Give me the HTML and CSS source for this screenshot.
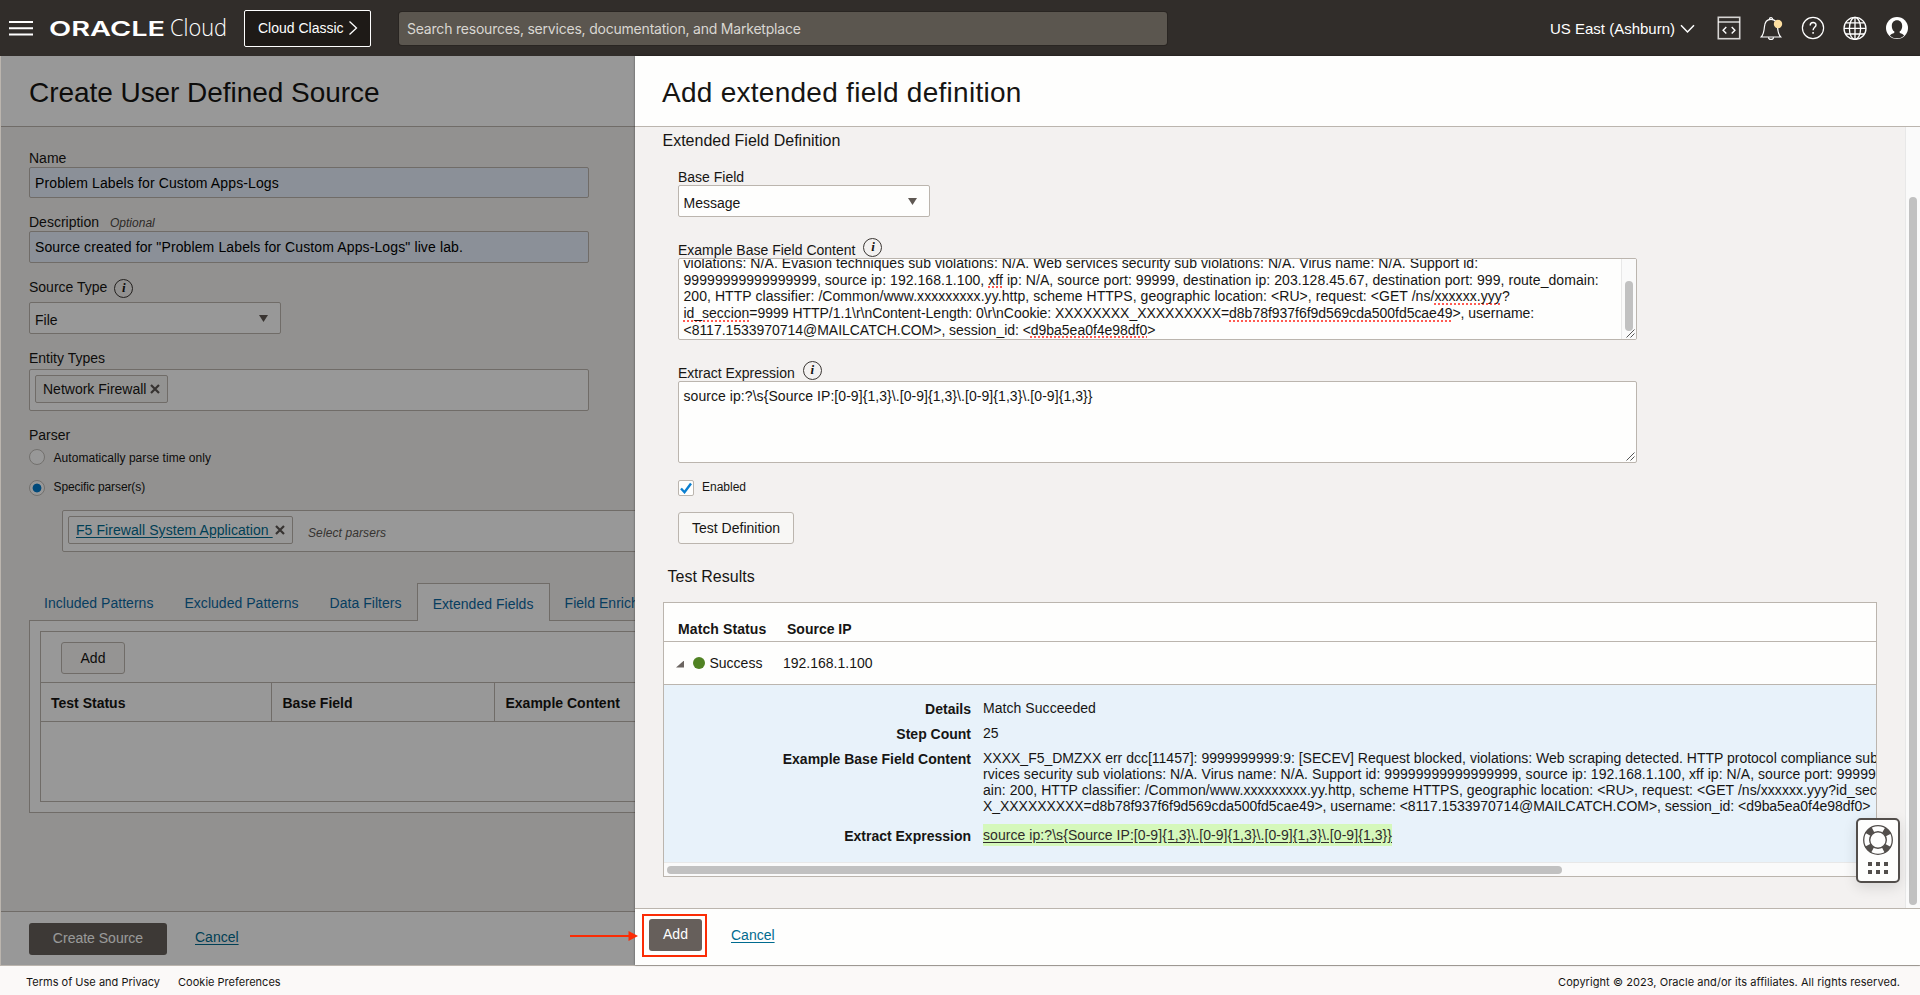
FILE: index.html
```html
<!DOCTYPE html>
<html lang="en">
<head>
<meta charset="utf-8">
<title>Oracle Cloud - Create User Defined Source</title>
<link rel="stylesheet" href="styles.css">
</head>
<body>
<div class="app">
  <header class="topbar">
    <svg class="menu" width="24" height="16" viewBox="0 0 24 16"><path d="M0 2h24M0 8.2h24M0 14.4h24" stroke="#fff" stroke-width="2"/></svg>
    <svg class="logo" width="180" height="28" viewBox="0 0 180 28">
      <text class="logo-oracle" x="0" y="21.500" textLength="116" lengthAdjust="spacingAndGlyphs">ORACLE</text>
      <text class="logo-cloud" x="121" y="21.500" textLength="57" lengthAdjust="spacingAndGlyphs">Cloud</text>
    </svg>
    <div class="classic">Cloud Classic
      <svg width="10" height="16" viewBox="0 0 10 16"><path d="M1.5 1.5L8.5 8l-7 6.5" fill="none" stroke="#fff" stroke-width="1.3"/></svg>
    </div>
    <div class="search">Search resources, services, documentation, and Marketplace</div>
    <div class="region">US East (Ashburn)
      <svg width="15" height="10" viewBox="0 0 15 10"><path d="M1 1.3l6.5 6.7L14 1.3" fill="none" stroke="#fff" stroke-width="1.5"/></svg>
    </div>
    <div class="top-icons">
      <svg width="24" height="24" viewBox="0 0 24 24" fill="none" stroke="#d6d4d2" stroke-width="1.6"><rect x="1.3" y="1.3" width="21.4" height="21.4"/><path d="M1 6h22" stroke="#fff" stroke-width="1.2"/><path d="M9.3 11l-3.2 3.2 3.2 3.2M14.7 11l3.2 3.2-3.2 3.2" stroke="#fff" stroke-width="1.4"/></svg>
      <svg width="24" height="24" viewBox="0 0 24 24" fill="none" stroke="#fff" stroke-width="1.2"><path d="M2.2 21c2.5-2.800 2.900-6 3.200-10C5.700 6 8 3.300 12 3.300s6.200 2.700 6.500 7.700c.3 4 .7 7.200 3.200 10z"/><path d="M10.400 3.300a1.600 1.600 0 0 1 3.200 0M9.500 21.200a2.500 2.200 0 0 0 5 0"/><circle cx="19" cy="8" r="4.200" fill="#fddfa0" stroke="none"/></svg>
      <svg width="24" height="24" viewBox="0 0 24 24" fill="none" stroke="#fff" stroke-width="1.200"><circle cx="12" cy="12" r="10.600"/><path d="M9.200 9.500c0-4 5.800-3.800 5.800-.5 0 2.300-2.900 2.400-2.900 5.200" stroke-width="1.400"/><path d="M12.100 16v1.800" stroke-width="1.500"/></svg>
      <svg width="24" height="24" viewBox="0 0 24 24" fill="none" stroke="#fff" stroke-width="1.300"><circle cx="12" cy="12.400" r="11"/><ellipse cx="12" cy="12.400" rx="5.600" ry="11"/><path d="M12 1.400v22M1 12.400h22M3 6.800h18M3 18h18"/></svg>
      <svg width="24" height="24" viewBox="0 0 24 24"><circle cx="12" cy="12" r="11" fill="#fff"/><path d="M12 4.300c-3.200 0-5.200 2.300-5.200 5.600 0 2.400.9 4.500 2.600 5.700l-.2 1.300c-2 .5-3.500 1.300-4.300 2.500C6.700 21.300 9.200 22.300 12 22.300s5.300-1 7.100-2.900c-.8-1.200-2.300-2-4.300-2.500l-.2-1.300c1.700-1.200 2.600-3.300 2.600-5.700 0-3.300-2-5.600-5.200-5.600z" fill="#312d2a"/></svg>
    </div>
  </header>

  <div class="work">
    <section class="pane">
      <div class="pane-title title-source">Create User Defined Source</div>
      <div class="form">
        <div class="lbl">Name</div>
        <div class="inp inp-name">Problem Labels for Custom Apps-Logs</div>
        <div class="lbl lbl-desc">Description <i>Optional</i></div>
        <div class="inp inp-desc">Source created for "Problem Labels for Custom Apps-Logs" live lab.</div>
        <div class="lbl lbl-type">Source Type <span class="info">i</span></div>
        <div class="select">File<span class="caret"></span></div>
        <div class="lbl lbl-entity">Entity Types</div>
        <div class="tagbox"><span class="tag">Network Firewall<svg width="10" height="10" viewBox="0 0 10 10"><path d="M1 1l8 8M9 1L1 9"/></svg></span></div>
        <div class="lbl lbl-parser">Parser</div>
        <div class="radio"><span class="dot"></span>Automatically parse time only</div>
        <div class="radio radio-on"><span class="dot"></span><span class="up">Specific parser(s)</span></div>
        <div class="tagbox parsers"><span class="tag tag-link"><u>F5 Firewall System Application&nbsp;</u><svg width="10" height="10" viewBox="0 0 10 10"><path d="M1 1l8 8M9 1L1 9"/></svg></span><i>Select parsers</i></div>
        <nav class="tabs">
          <span>Included Patterns</span><span>Excluded Patterns</span><span>Data Filters</span><span class="active">Extended Fields</span><span>Field Enrichment</span>
        </nav>
        <div class="tabbody">
          <div class="grid">
            <div class="toolbar"><span class="btn">Add</span></div>
            <div class="cols"><b>Test Status</b><b>Base Field</b><b>Example Content</b></div>
          </div>
        </div>
      </div>
      <div class="pane-foot"><span class="primary">Create Source</span><a class="link">Cancel</a></div>
      <div class="shade"></div>
    </section>

    <section class="drawer">
      <div class="pane-title title-add">Add extended field definition</div>
      <div class="drawer-body">
        <div class="content">
          <div class="h16">Extended Field Definition</div>
          <div class="fields">
            <div class="lbl">Base Field</div>
            <div class="select">Message<span class="caret"></span></div>
            <div class="lbl lbl-example">Example Base Field Content <span class="info">i</span></div>
            <div class="area area-log">
              <div class="log"><div class="ln">violations: N/A. Evasion techniques sub violations: N/A. Web services security sub violations: N/A. Virus name: N/A. Support id:</div><div class="ln">99999999999999999, source ip: 192.168.1.100, <s>xff</s> ip: N/A, source port: 99999, destination ip: 203.128.45.67, destination port: 999, route_domain:</div><div class="ln">200, HTTP classifier: /Common/www.xxxxxxxxx.yy.http, scheme HTTPS, geographic location: &lt;RU&gt;, request: &lt;GET /ns/<s>xxxxxx.yyy</s>?</div><div class="ln tight"><s>id_seccion</s>=9999 HTTP/1.1\r\nContent-Length: 0\r\nCookie: XXXXXXXX_XXXXXXXXX=<s>d8b78f937f6f9d569cda500fd5cae49</s>&gt;, username:</div><div class="ln tight">&lt;8117.1533970714@MAILCATCH.COM&gt;, session_id: &lt;<s>d9ba5ea0f4e98df0</s>&gt;</div></div>
              <div class="area-scroll"><span></span></div>
              <svg class="grip" width="9" height="9" viewBox="0 0 9 9"><path d="M.5 8.500l8-8M4.500 8.500l4-4"/></svg>
            </div>
            <div class="lbl lbl-extract">Extract Expression <span class="info">i</span></div>
            <div class="area area-expr">source ip:?\s{Source IP:[0-9]{1,3}\.[0-9]{1,3}\.[0-9]{1,3}\.[0-9]{1,3}}
              <svg class="grip" width="9" height="9" viewBox="0 0 9 9"><path d="M.5 8.500l8-8M4.500 8.500l4-4"/></svg>
            </div>
            <div class="check"><span class="box"><svg width="12" height="12" viewBox="0 0 12 12"><path d="M1 6.500l3.500 3.700L11 1.500" fill="none" stroke="#0b7fd0" stroke-width="2.400"/></svg></span><span class="up">Enabled</span></div>
            <span class="btn btn-test">Test Definition</span>
          </div>
          <div class="h16 h-results">Test Results</div>
          <div class="results">
            <div class="r-head"><b>Match Status</b><b>Source IP</b></div>
            <div class="r-row"><span class="tri"></span><span class="ok"></span><span class="st">Success</span><span>192.168.1.100</span></div>
            <div class="r-detail">
              <b>Details</b><span class="val">Match Succeeded</span>
              <b>Step Count</b><span class="val">25</span>
              <b>Example Base Field Content</b><div class="val"><div class="snug">XXXX_F5_DMZXX err dcc[11457]: 9999999999:9: [SECEV] Request blocked, violations: Web scraping detected. HTTP protocol compliance sub</div><div>rvices security sub violations: N/A. Virus name: N/A. Support id: 99999999999999999, source ip: 192.168.1.100, xff ip: N/A, source port: 99999</div><div>ain: 200, HTTP classifier: /Common/www.xxxxxxxxx.yy.http, scheme HTTPS, geographic location: &lt;RU&gt;, request: &lt;GET /ns/xxxxxx.yyy?id_sec</div><div class="tight">X_XXXXXXXXX=d8b78f937f6f9d569cda500fd5cae49&gt;, username: &lt;8117.1533970714@MAILCATCH.COM&gt;, session_id: &lt;d9ba5ea0f4e98df0&gt;</div></div>
              <b>Extract Expression</b><span class="val"><mark>source ip:?\s{Source IP:[0-9]{1,3}\.[0-9]{1,3}\.[0-9]{1,3}\.[0-9]{1,3}}</mark></span>
            </div>
            <div class="hscroll"><span></span></div>
          </div>
        </div>
        <div class="vscroll"><span></span></div>
      </div>
      <div class="drawer-foot"><span class="primary">Add</span><a class="link">Cancel</a></div>
    </section>
  </div>

  <footer class="foot"><span>Terms of Use and Privacy</span><span>Cookie Preferences</span><span class="copy">Copyright © 2023, Oracle and/or its affiliates. All rights reserved.</span></footer>

  <div class="callout"></div>
  <svg class="arrow" width="70" height="12" viewBox="0 0 70 12"><path d="M0 6h60" stroke="#fb2c05" stroke-width="2"/><path d="M58.500 1l9.500 5-9.500 5z" fill="#fb2c05"/></svg>
  <div class="help">
    <svg width="32" height="32" viewBox="0 0 32 32" fill="none" stroke="#524e4b"><circle cx="16" cy="16" r="11.500" stroke-width="6.500" stroke-dasharray="6.800 11.260" stroke-dashoffset="-5.630"/><circle cx="16" cy="16" r="14.300" stroke-width="1.300"/><circle cx="16" cy="16" r="8.300" stroke-width="1.400"/></svg>
    <svg width="20" height="12" viewBox="0 0 20 12" fill="#524e4b"><path d="M0 0h4v4H0zM8 0h4v4H8zM16 0h4v4h-4zM0 8h4v4H0zM8 8h4v4H8zM16 8h4v4h-4z"/></svg>
  </div>
</div>
</body>
</html>
```
FILE: styles.css
```css
* { box-sizing: border-box; }
body { margin: 0; font: 14px/16px "Liberation Sans", Arial, sans-serif; color: #161513; }
.app { position: relative; width: 1920px; height: 995px; overflow: hidden; display: flex; flex-direction: column; }
svg { display: block; flex: none; }

.topbar { height: 56px; flex: none; background: #312d2a; color: #fff; display: flex; align-items: center; padding-left: 9px; }
.logo { margin-left: 16px; overflow: visible; }
.logo text { fill: #fff; }
.logo-oracle { font: 600 20.500px Inter, sans-serif; }
.logo-cloud { font: 300 23px "Open Sans", sans-serif; }
.classic { margin-left: 15px; width: 127px; height: 37px; border: 1px solid #fff; border-radius: 2px; background: #1e1a17; display: flex; align-items: center; gap: 4px; padding-left: 13px; white-space: nowrap; }
.search { margin-left: 28px; width: 768px; height: 33px; border-radius: 3px; background: #5b564f; color: #d9d6d2; font: 14px/33px Inter, sans-serif; letter-spacing: -.21px; padding-left: 8px; box-shadow: 0 0 0 1px #292522; margin-top: 1px; }
.region { margin-left: 383px; width: 145px; font-size: 15px; display: flex; align-items: center; gap: 5px; white-space: nowrap; margin-top: 1px; }
.top-icons { margin-left: 22px; display: flex; gap: 18px; }

.work { height: 909px; flex: none; display: flex; }
.pane { position: relative; isolation: isolate; width: 635px; background: #f4f2f0; border-left: 1px solid #bbb5ae; display: flex; flex-direction: column; overflow: hidden; }
.shade { position: absolute; z-index: 2; inset: 0 0 0 -1px; background: rgba(0,0,0,.4); }
.pane-title { height: 71px; flex: none; border-bottom: 1px solid #bbb5ae; background: #fefefd; font-size: 28px; line-height: 73px; padding-left: 28px; white-space: nowrap; }
.title-source { letter-spacing: -.05px; }
.title-add { letter-spacing: .27px; padding-left: 27px; }
.form { flex: 1; padding: 23px 0 0 28px; white-space: nowrap; }
.lbl { height: 17px; display: flex; align-items: flex-start; }
.lbl i { font-size: 12px; margin-left: 11px; color: #4c4845; line-height: 18px; }
.inp { width: 560px; border: 1px solid #bbb5ae; border-radius: 2px; background: #e8f0fe; color: #000; padding-left: 5px; letter-spacing: .12px; }
.inp-name { height: 31px; line-height: 30px; }
.inp-desc { height: 32px; line-height: 31px; letter-spacing: .12px; }
.lbl-desc { margin-top: 16px; }
.lbl-type { margin-top: 16px; height: 23px; }
.info { width: 19px; height: 19px; border: 1.3px solid #3a3633; border-radius: 50%; font: italic bold 13px/16px "Liberation Serif", serif; text-align: center; margin: 0 0 0 7px; flex: none; }
.select { width: 252px; height: 32px; border: 1px solid #bbb5ae; border-radius: 2px; background: #fefefd; padding: 0 12px 0 5px; display: flex; justify-content: space-between; line-height: 34px; }
.caret { width: 9px; height: 7px; margin-top: 12px; background: #5f5853; clip-path: polygon(0 0, 100% 0, 50% 100%); }
.lbl-entity { margin-top: 16px; height: 19px; }
.tagbox { width: 560px; height: 42px; border: 1px solid #bbb5ae; border-radius: 2px; background: #fefefd; padding: 5px; display: flex; }
.tag { width: 133px; height: 28px; border: 1px solid #bbb5ae; border-radius: 2px; background: #f6f5f3; display: flex; align-items: center; justify-content: space-between; padding: 0 7px; }
.tag path { stroke: #5b5552; stroke-width: 2.200; }
.lbl-parser { margin-top: 16px; height: 22px; }
.radio { display: flex; font-size: 12px; height: 16px; line-height: 18px; gap: 8.500px; letter-spacing: .05px; }
.radio .dot { width: 16px; height: 16px; border: 1px solid #bfbbb7; border-radius: 50%; background: #fefefd; }
.radio-on { margin-top: 15px; }
.radio-on .dot { background: radial-gradient(circle, #007acc 4px, #fefefd 4.800px); }
.radio .up { line-height: 15px; letter-spacing: -.1px; }
.parsers { margin: 14px 0 0 33px; width: 700px; }
.parsers i { font-size: 12px; color: #5a5653; margin: 9px 0 0 15px; letter-spacing: .1px; }
.tag-link { width: 225px; background: #fefefd; color: #006b8f; padding: 0 7px; letter-spacing: .07px; }
.tag-link u { text-underline-offset: 2px; }
.tabs { margin: 31px 0 0; height: 37px; display: flex; line-height: 40px; color: #0c68a0; padding-left: 15px; letter-spacing: .03px; }
.tabs span { margin-right: 31px; }
.tabs span:nth-child(3) { margin-right: 15px; }
.tabs .active { width: 133px; flex: none; margin-right: 15px; border: 1px solid #bbb5ae; border-bottom: 0; background: #fefefd; text-align: center; height: 38px; position: relative; z-index: 1; line-height: 40px; }
.tabbody { height: 193px; width: 900px; border: 1px solid #bbb5ae; background: #fefefd; padding: 10px; }
.grid { height: 171px; border: 1px solid #bbb5ae; }
.toolbar { height: 50px; padding: 10px 20px; }
.btn { display: block; width: 64px; height: 32px; border: 1px solid #bbb5ae; border-radius: 3px; background: #f8f7f5; line-height: 31px; text-align: center; }
.cols { height: 40px; border: solid #bbb5ae; border-width: 1px 0; display: flex; line-height: 40px; }
.cols b { width: 223px; padding-left: 10.500px; border-right: 1px solid #bbb5ae; }
.cols b:first-child { width: 231px; padding-left: 10px; }
.pane-foot { height: 54px; flex: none; border-top: 1px solid #bbb5ae; background: #fefefd; padding: 11px 28px 0; display: flex; gap: 28px; }
.primary { display: block; width: 138px; height: 32px; border-radius: 3px; background: #665f5b; color: #fff; text-align: center; line-height: 31px; }
.link { color: #006b8f; text-decoration: underline; text-underline-offset: 2px; line-height: 29px; }

.drawer { width: 1285px; background: #f3f1f0; box-shadow: 0 0 2px rgba(0,0,0,.5); position: relative; display: flex; flex-direction: column; }
.drawer-body { flex: 1; display: flex; min-height: 0; }
.content { flex: 1; min-width: 0; padding: 5px 28px 0; white-space: nowrap; }
.h16 { font-size: 16px; line-height: 18px; height: 20px; margin-left: -.5px; }
.fields { padding: 17px 0 0 15px; }
.fields .lbl { height: 16px; }
.fields .select { padding-left: 4.500px; }
.fields .lbl-example { margin-top: 25px; position: relative; z-index: 1; }
.fields .info { margin: -4px 0 0 8px; }
.area { position: relative; width: 959px; height: 82px; border: 1px solid #bbb5ae; border-radius: 2px; background: #fefefd; padding: 0 4.500px; letter-spacing: .06px; overflow: hidden; }
.log { margin-top: -4px; line-height: 16.700px; }
.ln { height: 16.700px; }
.ln.tight { letter-spacing: -.03px; }
.log s { text-decoration: underline dotted #ff5a52 2px; text-underline-offset: 2px; text-decoration-skip-ink: none; }
.area-scroll { position: absolute; top: 0; right: 0; width: 15px; height: 80px; border-left: 1px solid #e8e8e8; background: #fafafa; padding: 22px 3px 0; }
.area-scroll span { display: block; height: 50px; border-radius: 4px; background: #c1c1c1; }
.grip { position: absolute; right: 1px; bottom: 1px; fill: none; stroke: #555; stroke-width: 1; }
.lbl-extract { margin-top: 25px; }
.area-expr { padding-top: 6px; }
.check { display: flex; gap: 8px; margin-top: 17px; font-size: 12px; line-height: 15px; }
.box { width: 16px; height: 16px; border: 1px solid #bbb5ae; border-radius: 2px; background: #fefefd; padding: 1px; }
.btn-test { width: 116px; margin-top: 16px; }
.h-results { margin: 23px 0 0 4.500px; line-height: 19px; }
.results { width: 1214px; height: 275px; margin-top: 15px; border: 1px solid #bbb5ae; background: #fefefd; overflow: hidden; display: flex; flex-direction: column; }
.r-head { height: 39px; border-bottom: 1px solid #bbb5ae; display: flex; padding: 18px 0 0 14px; }
.r-head b:first-child { width: 109px; letter-spacing: .1px; }
.r-row { height: 43px; border-bottom: 1px solid #bbb5ae; display: flex; align-items: center; padding-left: 12px; }
.tri { width: 8px; height: 7px; background: #6b6460; clip-path: polygon(100% 0, 100% 100%, 0 100%); margin-top: 2px; }
.ok { width: 12px; height: 12px; border-radius: 50%; background: #508223; margin: 0 4.500px 0 9px; }
.st { width: 73.500px; }
.r-detail { height: 177px; flex: none; background: #e8f2fa; display: grid; grid-template-columns: 307px 1400px; grid-template-rows: 25px 25px 77px 30px; column-gap: 12px; padding-top: 16px; }
.r-detail b { text-align: right; }
.r-detail > .val { margin-top: -1px; letter-spacing: .06px; }
.r-detail .snug { letter-spacing: 0; }
.r-detail .tight { letter-spacing: -.05px; }
mark { display: inline-block; background: #d5f8bb; color: #2f2c2a; padding: 3px 0; margin-top: -3px; text-decoration: underline; text-underline-offset: 2px; }
.hscroll { flex: 1; background: #fafafa; border-top: 1px solid #e8e8e8; padding: 3px 0 0 3px; }
.hscroll span { display: block; width: 895px; height: 8px; border-radius: 4px; background: #c1c1c1; }
.vscroll { width: 15px; border-left: 1px solid #e8e8e8; background: #fafafa; padding: 70px 3px 0; }
.vscroll span { display: block; height: 708px; border-radius: 4px; background: #c1c1c1; }
.drawer-foot { height: 57px; flex: none; border-top: 1px solid #bbb5ae; background: #fefefd; padding: 10px 14px; display: flex; gap: 29px; }
.drawer-foot .primary { width: 53px; }
.drawer-foot .link { line-height: 33px; }

.foot { flex: 1; border-top: 1px solid #bbb5ae; background: #fbf9f8; display: flex; gap: 18px; padding: 0 20px 0 26px; font: 11px/30px Inter, sans-serif; letter-spacing: .01px; }
.foot span { margin-top: 1px; }
.foot .copy { margin-left: auto; letter-spacing: .06px; }
.callout { position: absolute; left: 642px; top: 914px; width: 65px; height: 43px; border: 2px solid #fb2c05; }
.arrow { position: absolute; left: 570px; top: 930px; }
.help { position: absolute; left: 1856px; top: 818px; width: 44px; height: 65px; border: 2px solid #524e4b; border-radius: 5px; background: #fefefd; box-shadow: 0 4px 14px rgba(0,0,0,.12); display: flex; flex-direction: column; align-items: center; padding-top: 4px; gap: 6px; }
```
